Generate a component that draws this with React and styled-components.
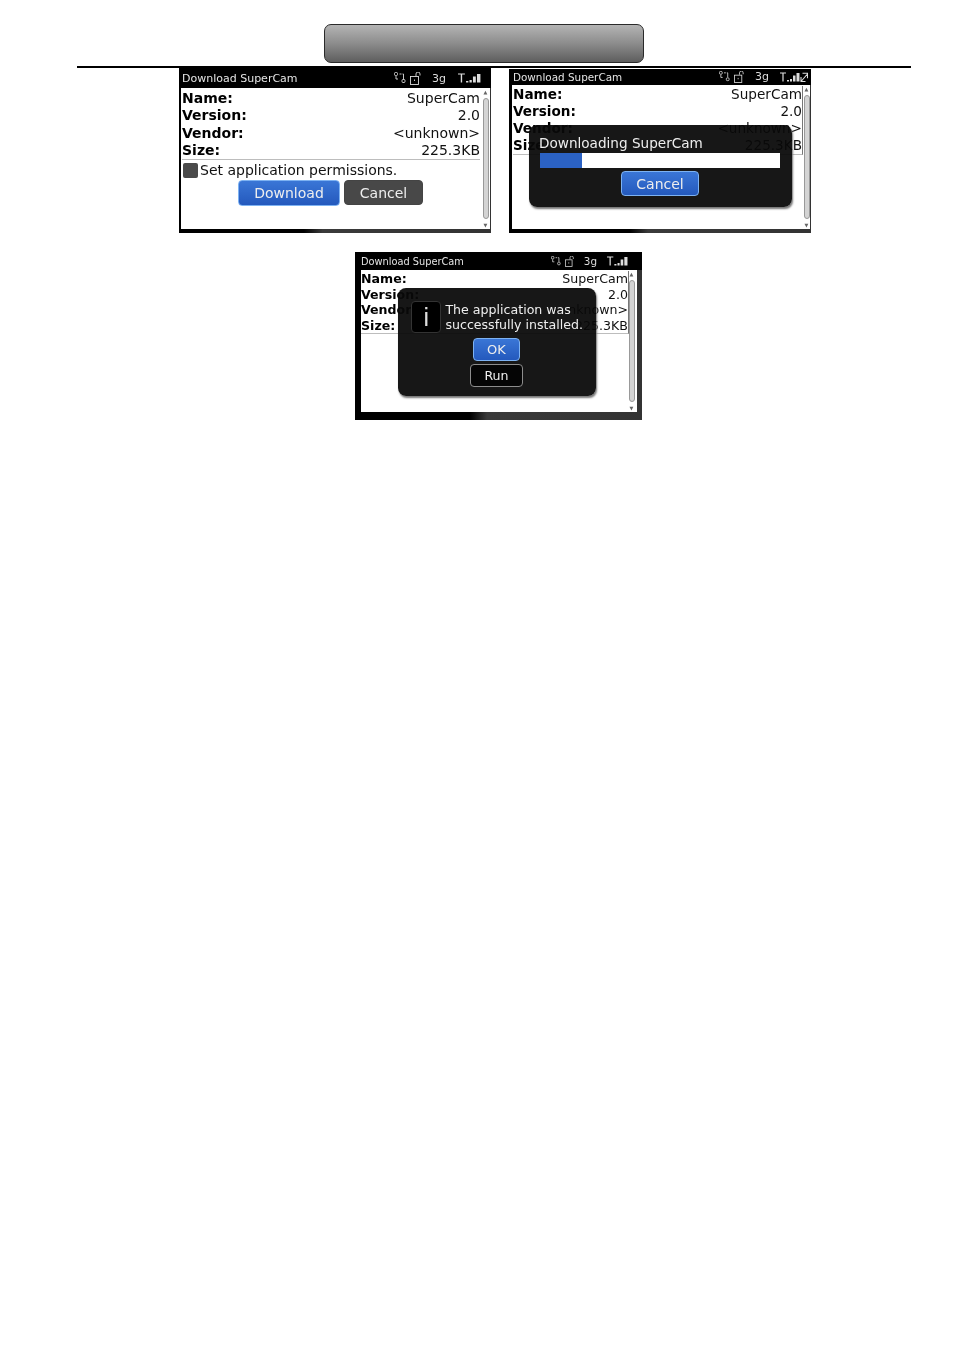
import React from 'react'
import styled, { createGlobalStyle } from 'styled-components'

const GlobalStyle = createGlobalStyle`
  html, body {
    margin: 0;
    padding: 0;
    background: #fff;
    font-family: 'DejaVu Sans', sans-serif;
  }
`

const Page = styled.div`
  width: 954px;
  height: 1350px;
  padding: 24px 43px 0 77px;
  box-sizing: border-box;
  overflow: hidden;
`

const TitleBar = styled.div`
  width: 320px;
  height: 39px;
  margin-left: 247px;
  box-sizing: border-box;
  border: 1.5px solid #2a2a2a;
  border-radius: 7px;
  background: linear-gradient(180deg, #b4b4b4 0%, #8c8c8c 50%, #5e5e5e 100%);
`

const Rule = styled.hr`
  height: 2px;
  margin: 3px 0 0;
  border: 0;
  background: #000;
`

const TopRow = styled.div`
  display: flex;
  gap: 18px;
  margin-left: 102px;
`

const BottomRow = styled.div`
  display: flex;
  margin: 19px 0 0 278px;
`

const Screen = styled.div`
  position: relative;
  display: flex;
  flex-direction: column;
  width: ${p => p.$w}px;
  height: ${p => p.$h}px;
  margin-top: ${p => p.$top || 0}px;
  box-sizing: border-box;
  padding: 0 ${p => p.$right}px ${p => p.$bottom}px ${p => p.$left}px;
  background: linear-gradient(90deg, #000 0%, #000 40%, #3a3a3a 46%, #333 100%);
  color: #111;
  filter: blur(0.35px);
`

const StatusBar = styled.div`
  display: flex;
  align-items: center;
  justify-content: space-between;
  flex: none;
  height: ${p => p.$h}px;
  margin: 0 -${p => p.$right}px 0 -${p => p.$left}px;
  padding: 0 ${p => p.$pr}px ${p => p.$pb || 0}px ${p => p.$pl}px;
  box-sizing: border-box;
  background: #000;
  color: #e4e4e4;
  font-size: ${p => p.$fs}px;
`

const StatusIcons = styled.div`
  display: flex;
  align-items: center;
  gap: 4px;
  color: #ddd;
`

const NetworkLabel = styled.span`
  margin: 0 ${p => p.$after}px 0 ${p => p.$before}px;
  font-size: ${p => p.$fs}px;
`

const Content = styled.div`
  position: relative;
  display: flex;
  flex: 1;
  background: #fff;
`

const Details = styled.div`
  flex: 1;
  padding: ${p => p.$pt}px ${p => p.$pr}px 0 ${p => p.$pl}px;
  min-width: 0;
`

const InfoTable = styled.div`
  border-bottom: 1px solid #bdbdbd;
  border-right: ${p => (p.$edge ? '1px solid #777' : '0')};
`

const InfoRow = styled.div`
  display: flex;
  justify-content: space-between;
  height: ${p => p.$h}px;
  line-height: ${p => p.$h}px;
  font-size: ${p => p.$fs}px;
  white-space: nowrap;
`

const InfoLabel = styled.span`
  font-weight: 700;
  color: #000;
`

const Permission = styled.div`
  display: flex;
  align-items: center;
  gap: 2px;
  height: 20px;
  padding-left: 1px;
  font-size: 14px;
  white-space: nowrap;
`

const CheckBox = styled.span`
  width: 15px;
  height: 15px;
  border-radius: 2px;
  background: #4a4a4a;
`

const Actions = styled.div`
  display: flex;
  gap: 4px;
  margin: 0 0 0 56px;
`

const Button = styled.button`
  display: flex;
  align-items: center;
  justify-content: center;
  width: ${p => p.$w}px;
  height: ${p => p.$h}px;
  margin: ${p => p.$m || 0};
  padding: 0;
  box-sizing: border-box;
  border: 1px solid ${p => (p.$kind === 'primary' ? '#7db2f2' : p.$kind === 'ghost' ? '#8d8d8d' : '#444')};
  border-radius: 4px;
  background: ${p => (p.$kind === 'primary' ? 'linear-gradient(180deg, #3a76d6, #2459bd)' : p.$kind === 'ghost' ? '#050505' : '#484848')};
  color: #eee;
  font-family: inherit;
  font-size: ${p => p.$fs}px;
`

const ScrollTrack = styled.div`
  display: flex;
  flex-direction: column;
  align-items: center;
  flex: none;
  width: ${p => p.$w}px;
  padding-right: ${p => p.$pr || 0}px;
  color: #666;
  font-size: 5px;
  line-height: 8px;
`

const ScrollThumb = styled.div`
  flex: 1;
  width: 6px;
  margin: 2px 0;
  box-sizing: border-box;
  border: 1px solid #999;
  border-radius: 3px;
  background: #d4d4d4;
`

const Dialog = styled.div`
  position: absolute;
  left: ${p => p.$x}px;
  top: ${p => p.$y}px;
  width: ${p => p.$w}px;
  height: ${p => p.$h}px;
  box-sizing: border-box;
  padding: ${p => p.$pad};
  border-radius: 8px;
  background: rgba(8, 8, 8, 0.94);
  box-shadow: 1px 2px 2px #777;
  color: #eee;
`

const DialogText = styled.div`
  font-size: ${p => p.$fs}px;
  line-height: ${p => p.$lh}px;
  white-space: nowrap;
`

const Progress = styled.div`
  width: 240px;
  height: 15px;
  margin: 1px 0 0 1px;
  background: #fff;
`

const ProgressFill = styled.div`
  height: 100%;
  background: #2b62c4;
`

const MessageRow = styled.div`
  display: flex;
  align-items: center;
  gap: 4px;
`

const InfoIcon = styled.div`
  display: flex;
  align-items: center;
  justify-content: center;
  width: 32px;
  height: 32px;
  box-sizing: border-box;
  border: 1px solid #333;
  border-radius: 4px;
  background: #000;
  font-size: 25px;
  font-family: 'Liberation Sans', sans-serif;
  color: #ddd;
`

const StatusGlyphs = ({ expand, size = 12, labelSize = 11, before = 6, after = 8, signal = 23 }) => (
  <StatusIcons>
    <svg width={size} height={size} viewBox="0 0 12 12" fill="none" stroke="currentColor" strokeWidth="0.9">
      <rect x="0.5" y="0.5" width="3" height="3" rx="1" />
      <rect x="8" y="7.5" width="3" height="3" rx="1" />
      <path d="M2 4v3h2M8.5 2h1v5M5.5 2h2" />
    </svg>
    <svg width={size} height={size + 1} viewBox="0 0 12 13" fill="none" stroke="currentColor" strokeWidth="0.9">
      <rect x="0.5" y="4.5" width="8" height="8" />
      <path d="M6 4V2a2 2 0 0 1 4 0v1.5" />
      <path d="M4.5 7.5v1.5" />
    </svg>
    <NetworkLabel $before={before} $after={after} $fs={labelSize}>3g</NetworkLabel>
    <svg width={signal} height="10" viewBox={expand ? '0 0 28 10' : '0 0 20 10'} preserveAspectRatio="none" fill="currentColor">
      <path d="M0 0.5h6v1H3.6v8h-1.2v-8H0z" />
      <rect x="7" y="8" width="2" height="1.5" />
      <rect x="10" y="7" width="2" height="2.5" />
      <rect x="13" y="3.5" width="2.5" height="6" />
      <rect x="16.5" y="1" width="3" height="8.5" />
      {expand && <path d="M21 9.5l6-7M22.5 1.2h5v5M21 5v4.5h4.5" fill="none" stroke="currentColor" strokeWidth="1.1" />}
    </svg>
  </StatusIcons>
)

const Scrollbar = ({ w, pr }) => (
  <ScrollTrack $w={w} $pr={pr}>
    <span>▲</span>
    <ScrollThumb />
    <span>▼</span>
  </ScrollTrack>
)

const Info = ({ h, fs, edge }) => (
  <InfoTable $edge={edge}>
    <InfoRow $h={h} $fs={fs}><InfoLabel>Name:</InfoLabel><span>SuperCam</span></InfoRow>
    <InfoRow $h={h} $fs={fs}><InfoLabel>Version:</InfoLabel><span>2.0</span></InfoRow>
    <InfoRow $h={h} $fs={fs}><InfoLabel>Vendor:</InfoLabel><span>&lt;unknown&gt;</span></InfoRow>
    <InfoRow $h={h} $fs={fs}><InfoLabel>Size:</InfoLabel><span>225.3KB</span></InfoRow>
  </InfoTable>
)

const App = () => (
  <Page>
    <GlobalStyle />
    <TitleBar />
    <Rule />
    <TopRow>
      <Screen $w={312} $h={165} $left={2} $right={1} $bottom={4}>
        <StatusBar $h={20} $fs={11} $left={2} $right={1} $pl={3} $pr={10}>
          <span>Download SuperCam</span>
          <StatusGlyphs />
        </StatusBar>
        <Content>
          <Details $pt={2} $pr={2} $pl={1}>
            <Info h={17.25} fs={14} />
            <Permission><CheckBox />Set application permissions.</Permission>
            <Actions>
              <Button $kind="primary" $w={102} $h={26} $fs={14}>Download</Button>
              <Button $w={79} $h={25} $fs={14}>Cancel</Button>
            </Actions>
          </Details>
          <Scrollbar w={7} pr={1} />
        </Content>
      </Screen>
      <Screen $w={302} $h={164} $top={1} $left={3} $right={1} $bottom={4}>
        <StatusBar $h={16} $fs={10.4} $left={3} $right={1} $pl={4} $pr={3} $pb={1}>
          <span>Download SuperCam</span>
          <StatusGlyphs expand size={11} after={7} signal={28} />
        </StatusBar>
        <Content>
          <Details $pt={1} $pr={0} $pl={1}>
            <Info h={16.9} fs={13.6} edge />
          </Details>
          <Scrollbar w={7} />
          <Dialog $x={17} $y={40} $w={263} $h={82} $pad="9px 11px 0 10px">
            <DialogText $fs={13.6} $lh={18}>Downloading SuperCam</DialogText>
            <Progress><ProgressFill style={{ width: `${(42 / 240) * 100}%` }} /></Progress>
            <Button $kind="primary" $w={78} $h={25} $fs={14} $m="3px 0 0 82px">Cancel</Button>
          </Dialog>
        </Content>
      </Screen>
    </TopRow>
    <BottomRow>
      <Screen $w={287} $h={168} $left={6} $right={5} $bottom={8}>
        <StatusBar $h={18} $fs={9.8} $left={6} $right={5} $pl={6} $pr={14}>
          <span>Download SuperCam</span>
          <StatusGlyphs size={10} labelSize={10.4} before={5} after={6} signal={21} />
        </StatusBar>
        <Content>
          <Details $pt={1} $pr={0} $pl={0}>
            <Info h={15.6} fs={12.6} edge />
          </Details>
          <Scrollbar w={5} pr={3} />
          <Dialog $x={37} $y={18} $w={198} $h={108} $pad="13px 13px 0 13px">
            <MessageRow>
              <InfoIcon>i</InfoIcon>
              <DialogText $fs={12.6} $lh={15}>The application was<br />successfully installed.</DialogText>
            </MessageRow>
            <Button $kind="primary" $w={47} $h={23} $fs={13} $m="5px 0 0 62px">OK</Button>
            <Button $kind="ghost" $w={53} $h={23} $fs={12.6} $m="3px 0 0 59px">Run</Button>
          </Dialog>
        </Content>
      </Screen>
    </BottomRow>
  </Page>
)

export default App
